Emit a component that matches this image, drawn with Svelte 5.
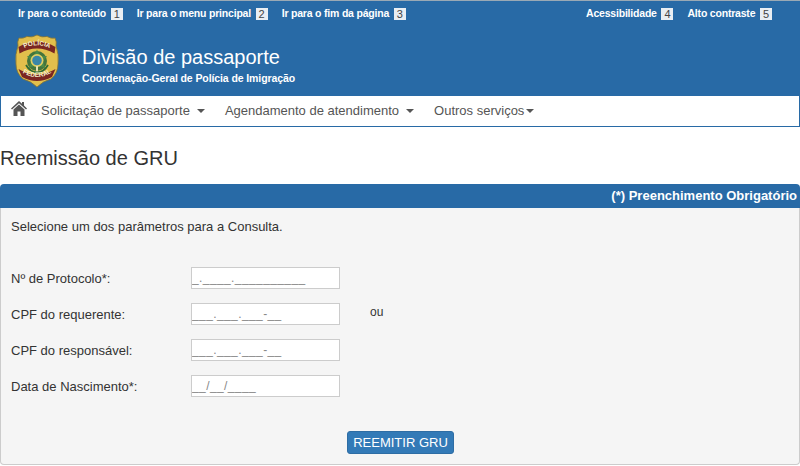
<script>
	const skipLinks = [
		{ label: 'Ir para o conteúdo', key: 1 },
		{ label: 'Ir para o menu principal', key: 2 },
		{ label: 'Ir para o fim da página', key: 3 }
	];
	const toolLinks = [
		{ label: 'Acessibilidade', key: 4 },
		{ label: 'Alto contraste', key: 5 }
	];
	const menu = [
		{ label: 'Solicitação de passaporte', gap: true },
		{ label: 'Agendamento de atendimento', gap: true },
		{ label: 'Outros serviços', gap: false }
	];
	const fields = [
		{ label: 'Nº de Protocolo*:', mask: '_.____.__________' },
		{ label: 'CPF do requerente:', mask: '___.___.___-__', ou: true },
		{ label: 'CPF do responsável:', mask: '___.___.___-__' },
		{ label: 'Data de Nascimento*:', mask: '__/__/____' }
	];
</script>

<header class="top">
	<div class="access">
		<div class="links">
			{#each skipLinks as link}
				<a href="#top">{link.label} <span class="key">{link.key}</span></a>
			{/each}
		</div>
		<div class="links">
			{#each toolLinks as link}
				<a href="#top">{link.label} <span class="key">{link.key}</span></a>
			{/each}
		</div>
	</div>
	<div class="brand">
		<svg class="emblem" viewBox="0 0 44 54" width="44" height="54" aria-hidden="true">
			<defs>
				<path id="arc-top" d="M5 16.500 Q22 6 39 16.500" />
				<path id="arc-bottom" d="M5.500 37.500 Q22 48.500 38.500 37.500" />
			</defs>
			<path d="M22 1 Q27 4 32 2.500 Q36 5 40 4 Q42 8 41 12 Q44 20 43 30 Q43 39 36 45 Q28 47 22 53 Q16 47 8 45 Q1 39 1 30 Q0 20 3 12 Q2 8 4 4 Q8 5 12 2.500 Q17 4 22 1 Z" fill="#e2bf4c" stroke="#8a7630" stroke-width="0.8" />
			<path d="M3.500 13 Q22 2 40.500 13 L39.500 19.500 Q22 9.500 4.500 19.500 Z" fill="#7a2622" />
			<path d="M3.500 35 Q22 46 40.500 35 L37 43 Q22 51 7 43 Z" fill="#7a2622" />
			<circle cx="22" cy="27" r="10" fill="#44753c" />
			<path d="M22 15.500 L25 22 L32 22 L28 27 L30 34 L22 31 L14 34 L16 27 L12 22 L19 22 Z" fill="#4a8a48" />
			<circle cx="22" cy="26.500" r="6.500" fill="#e2ce62" />
			<circle cx="22" cy="26.500" r="4.800" fill="#3a86a8" />
			<rect x="21" y="32" width="2" height="6" fill="#e8e0b0" />
			<path d="M11 31 Q15 38 22 38.500 Q29 38 33 31" fill="none" stroke="#2e6b35" stroke-width="1.800" />
			<text class="emblem-text"><textPath href="#arc-top" startOffset="50%" text-anchor="middle">POLÍCIA</textPath></text>
			<text class="emblem-text"><textPath href="#arc-bottom" startOffset="50%" text-anchor="middle">FEDERAL</textPath></text>
		</svg>
		<div class="titles">
			<h1>Divisão de passaporte</h1>
			<p>Coordenação-Geral de Polícia de Imigração</p>
		</div>
	</div>
	<nav class="menu">
		<svg class="home" viewBox="0 0 16 15" width="16" height="15" aria-hidden="true">
			<path d="M8 0 L11 2.700 V1 H13 V4.500 L16 7.500 L15 8.500 L8 2.200 L1 8.500 L0 7.500 Z M2.500 8.500 L8 3.500 L13.500 8.500 V15 H9.500 V10.500 H6.500 V15 H2.500 Z" fill="#555" />
		</svg>
		{#each menu as item}
			<a href="#top" class:tight={!item.gap}>{item.label}<span class="caret"></span></a>
		{/each}
	</nav>
</header>

<main>
	<h2>Reemissão de GRU</h2>
	<section class="panel">
		<div class="panel-head">(*) Preenchimento Obrigatório</div>
		<div class="panel-body">
			<p class="hint">Selecione um dos parâmetros para a Consulta.</p>
			<form class="fields">
				{#each fields as field}
					<div class="row">
						<label for={field.label}>{field.label}</label>
						<input id={field.label} type="text" placeholder={field.mask} />
						{#if field.ou}<span class="ou">ou</span>{/if}
					</div>
				{/each}
			</form>
			<div class="actions">
				<button type="button">REEMITIR GRU</button>
			</div>
		</div>
	</section>
</main>

<style>
	:global(body) {
		background: #fff;
		font-family: 'Liberation Sans', Arial, sans-serif;
		color: #333;
	}

	h1,
	h2,
	p {
		margin: 0;
		font-weight: 400;
	}

	a {
		text-decoration: none;
	}

	.top {
		background: #286aa6;
		border-top: 1px solid #9aa9b5;
	}

	.access {
		display: flex;
		justify-content: space-between;
		height: 24px;
		padding: 0 28px 0 18px;
		align-items: center;
	}

	.links {
		display: flex;
		gap: 14px;
		padding-top: 1px;
	}

	.links a {
		color: #fff;
		font-size: 10.500px;
		font-weight: 700;
		letter-spacing: -0.200px;
		white-space: nowrap;
	}

	.key {
		display: inline-block;
		width: 12px;
		height: 12px;
		margin-left: 2px;
		background: #e9eef3;
		color: #444;
		font-size: 11px;
		font-weight: 400;
		letter-spacing: 0;
		line-height: 12px;
		text-align: center;
		vertical-align: -1px;
	}

	.brand {
		display: flex;
		height: 71px;
		padding: 9px 0 0 15px;
		box-sizing: border-box;
	}

	.emblem {
		flex: none;
	}

	.emblem-text {
		fill: #f6f0d0;
		font-size: 6.500px;
		font-weight: 700;
		font-family: 'Liberation Sans', Arial, sans-serif;
	}

	.titles {
		margin-left: 23px;
		padding-top: 11px;
		color: #fff;
	}

	h1 {
		font-size: 20px;
		line-height: 24px;
	}

	.titles p {
		margin-top: 3px;
		font-size: 10.500px;
		font-weight: 700;
		letter-spacing: -0.100px;
		line-height: 13px;
	}

	.menu {
		display: flex;
		align-items: center;
		height: 31px;
		margin-left: 1px;
		margin-right: 1px;
		padding: 0 0 2px 10px;
		box-sizing: border-box;
		background: #fff;
		border-bottom: 1px solid #286aa6;
		box-shadow: 1px 0 0 #286aa6;
	}

	.home {
		margin-right: 14px;
		margin-top: -3px;
	}

	.menu a {
		margin-right: 20px;
		color: #555;
		font-size: 13px;
		white-space: nowrap;
	}

	.caret {
		display: inline-block;
		margin-left: 7px;
		vertical-align: 2px;
		border-top: 4px solid #555;
		border-left: 4px solid transparent;
		border-right: 4px solid transparent;
	}

	.menu a.tight .caret {
		margin-left: 2px;
	}

	h2 {
		margin-top: 19px;
		font-size: 20px;
		line-height: 24px;
		color: #333;
	}

	.panel {
		margin-top: 14px;
	}

	.panel-head {
		height: 24px;
		padding-right: 3px;
		background: #286aa6;
		border-radius: 4px 4px 0 0;
		color: #fff;
		font-size: 13px;
		font-weight: 700;
		line-height: 24px;
		text-align: right;
	}

	.panel-body {
		height: 257px;
		box-sizing: border-box;
		padding: 11px 10px 0;
		background: #f5f5f5;
		border: 1px solid #ccc;
		border-top: 0;
		border-radius: 0 0 4px 4px;
		font-size: 13px;
	}

	.hint {
		line-height: 16px;
	}

	.fields {
		display: flex;
		flex-direction: column;
		gap: 14px;
		margin-top: 32px;
	}

	.row {
		display: flex;
		align-items: center;
		height: 22px;
	}

	.row label {
		width: 180px;
		flex: none;
	}

	.row input {
		width: 149px;
		height: 22px;
		box-sizing: border-box;
		padding: 0;
		background: #fff;
		border: 1px solid #ccc;
		font-family: inherit;
		font-size: 12px;
		letter-spacing: 0.400px;
		outline: none;
	}

	.row input::placeholder {
		color: #888;
		opacity: 1;
	}

	.ou {
		margin-left: 30px;
		margin-top: -4px;
		font-size: 12px;
	}

	.actions {
		display: flex;
		justify-content: flex-end;
		margin-top: 34px;
		padding-right: 335px;
	}

	button {
		width: 107px;
		height: 23px;
		padding: 0;
		background: #337ab7;
		border: 1px solid #2e6da4;
		border-radius: 3px;
		color: #fff;
		font-family: inherit;
		font-size: 13px;
	}
</style>
